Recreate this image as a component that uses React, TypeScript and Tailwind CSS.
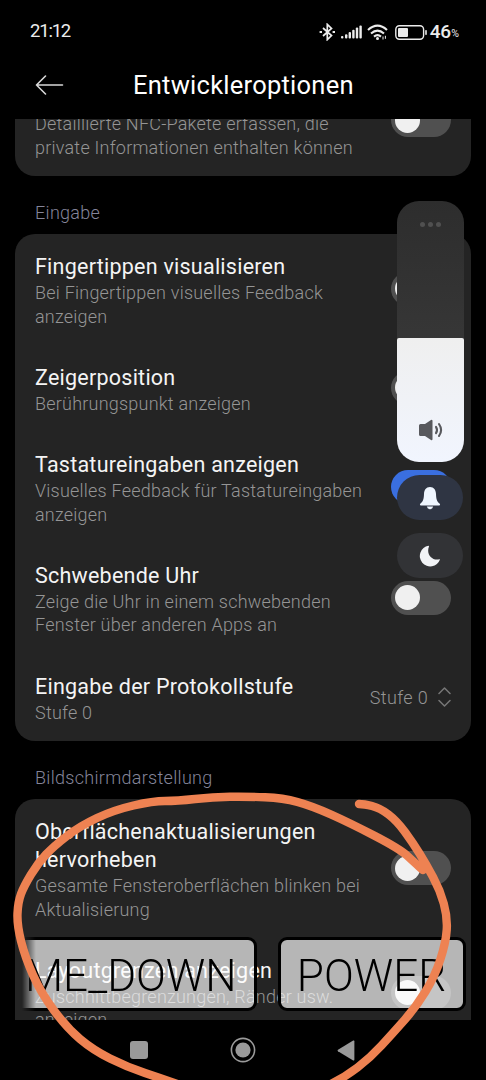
import React from 'react';

interface SettingRowProps {
    title: string[];
    summary: string[];
    checked?: boolean;
    children?: React.ReactNode;
}

const Toggle: React.FC<{ checked?: boolean }> = ({ checked = false }) => (
    <div
        className={`mb-[3px] flex h-[34px] w-[60.5px] shrink-0 items-center rounded-full px-[4.5px] ${
            checked ? 'justify-end bg-[#3a6fe0]' : 'justify-start bg-[#505050]'
        }`}
    >
        <div className="h-[25px] w-[25px] rounded-full bg-[#f0f0f0]"></div>
    </div>
);

const SettingRow: React.FC<SettingRowProps> = ({ title, summary, checked, children }) => (
    <div className="flex items-center justify-between pt-[19px] pr-5 pb-[16.7px] pl-5">
        <div className="whitespace-nowrap">
            {title.map((line) => (
                <div key={line} className="text-[21.5px] leading-[28px] tracking-[0.24px] text-[#f4f4f4]">{line}</div>
            ))}
            <div className="pt-[0.3px]">
                {summary.map((line) => (
                    <div key={line} className="text-[18px] leading-[23.4px] font-light tracking-[0.22px] text-[#959595]">{line}</div>
                ))}
            </div>
        </div>
        {children ?? <Toggle checked={checked} />}
    </div>
);

const SectionLabel: React.FC<{ text: string }> = ({ text }) => (
    <div className="pt-[25px] pb-[9px] pl-5 text-[18px] leading-[24px] font-light tracking-[0.3px] text-[#85859a]">{text}</div>
);

const StatusBar: React.FC = () => (
    <div className="flex h-[58px] items-center justify-between pt-[6px] pr-[27px] pl-[30px] text-[#ececec]">
        <span className="text-[18.5px] tracking-[-1.2px]">21:12</span>
        <div className="flex items-center">
            <svg width="17" height="18" viewBox="0 0 17 18" fill="none" stroke="currentColor" strokeWidth="1.7">
                <path d="M4 5 L12.5 12.6 L8.3 16.6 V1.4 L12.5 5.4 L4 13" />
                <path d="M0.6 9 H3 M13.6 9 H16" strokeWidth="2.2" />
            </svg>
            <svg className="ml-[5px]" width="21" height="14" viewBox="0 0 21 14" fill="currentColor">
                <rect x="0" y="11" width="2.4" height="2.6" rx="1" />
                <rect x="4" y="9.2" width="2.4" height="4.4" rx="1" />
                <rect x="7.6" y="7" width="2.4" height="6.6" rx="1" />
                <rect x="11.2" y="4.8" width="2.4" height="8.8" rx="1" />
                <rect x="14.8" y="2.6" width="2.4" height="11" rx="1" />
                <rect x="18.4" y="0.4" width="2.4" height="13.2" rx="1" />
            </svg>
            <svg className="ml-[5px]" width="22" height="17" viewBox="0 0 22 17" fill="none" stroke="currentColor" strokeWidth="2.1">
                <path d="M1 6 Q10.5 -2.6 20 6" />
                <path d="M4 9.5 Q10.5 3.7 17 9.5" />
                <path d="M7 12.6 Q10.5 9.6 14 12.6" />
                <circle cx="10.5" cy="14.6" r="1.5" fill="currentColor" stroke="none" />
                <path d="M16 12.5 V15.5 M18.4 11.8 V14.8" strokeWidth="1" />
            </svg>
            <svg className="ml-[6px]" width="33" height="15" viewBox="0 0 33 15" fill="none">
                <rect x="0.8" y="0.8" width="27.8" height="13.4" rx="3.6" stroke="currentColor" strokeWidth="1.4" />
                <rect x="3" y="3" width="10" height="9" rx="1" fill="currentColor" />
                <rect x="30.2" y="5" width="1.6" height="5" rx="0.8" fill="currentColor" />
            </svg>
            <span className="ml-[2px] text-[19px] leading-5 font-medium tracking-[-0.3px]">46</span>
            <span className="mt-[4px] ml-[0.5px] text-[10.5px] leading-4">%</span>
        </div>
    </div>
);

const Header: React.FC = () => (
    <div className="flex h-[61px] items-center pb-[8px] pl-[35px]">
        <svg width="29" height="20" viewBox="0 0 29 20" fill="none" stroke="#d8d8d8" strokeWidth="1.6" strokeLinecap="round" strokeLinejoin="round">
            <path d="M27.5 10 H1.5 M10.5 1 L1.5 10 L10.5 19" />
        </svg>
        <h1 className="ml-[69px] text-[25.5px] leading-8 tracking-[0.25px] whitespace-nowrap text-white">Entwickleroptionen</h1>
    </div>
);

const VolumePanel: React.FC = () => (
    <div className="absolute top-[201px] left-[396.5px] w-[67.5px]">
        <div className="flex h-[260.5px] flex-col overflow-hidden rounded-[22px] bg-gradient-to-b from-[#2d2d2d] via-[#363636] to-[#303030]">
            <div className="flex h-[137px] justify-center gap-[3.5px] pt-[21px]">
                <div className="h-[4.5px] w-[4.5px] rounded-full bg-[#505050]"></div>
                <div className="h-[4.5px] w-[4.5px] rounded-full bg-[#505050]"></div>
                <div className="h-[4.5px] w-[4.5px] rounded-full bg-[#505050]"></div>
            </div>
            <div className="flex flex-1 items-end justify-center rounded-t-[2px] bg-gradient-to-b from-[#efefef] to-[#f1f5fe] pb-[21px]">
                <svg width="25" height="22" viewBox="0 0 25 22" fill="none" stroke="#58595d" strokeWidth="2.1" strokeLinecap="round">
                    <path d="M2.5 5 H7 L13 0.9 Q14.5 0.2 14.5 2 V20 Q14.5 21.8 13 21.1 L7 17 H2.5 Q1 17 1 15.5 V6.5 Q1 5 2.5 5 Z" fill="#58595d" stroke="none" />
                    <path d="M18 7.8 Q20.1 11 18 14.2" />
                    <path d="M21 5 Q25.2 11 21 17" />
                </svg>
            </div>
        </div>
        <div className="mt-[13.5px] flex h-[45px] w-[66.5px] items-center justify-center rounded-full bg-[#2f3543]">
            <svg width="22" height="24" viewBox="0 0 22 24" fill="#eff6ff">
                <path d="M11 1 C7 1 5.2 4.2 5 8 C4.8 13.5 4 15.5 1.2 17.8 Q0.4 19 1.6 19.4 H20.4 Q21.6 19 20.8 17.8 C18 15.5 17.2 13.5 17 8 C16.8 4.2 15 1 11 1 Z" />
                <path d="M7.8 20.6 H14.2 Q13.6 23.2 11 23.2 Q8.4 23.2 7.8 20.6 Z" />
            </svg>
        </div>
        <div className="mt-[13px] flex h-[45px] w-[66.5px] items-center justify-center rounded-full bg-[#323336]">
            <svg width="22" height="22" viewBox="0 0 22 22" fill="#f1f3f6">
                <path d="M9.4 0.8 A10.4 10.4 0 1 0 21 14.6 Q21 14 20.2 14.2 C13.4 16 6.8 9.6 10 1.6 Q10.2 0.7 9.4 0.8 Z" />
            </svg>
        </div>
    </div>
);

// Bar of key names shown at the bottom while hardware keys are pressed
const KeyOverlay: React.FC = () => (
    <div className="absolute top-[937px] left-[22px] flex h-[74px] w-[443.5px] justify-end gap-[21px] overflow-hidden text-[44px] font-light text-black [mask-image:linear-gradient(to_right,transparent,black_14px)]">
        <div className="flex shrink-0 items-center justify-end rounded-[9px] border-[3px] border-black bg-white/67 pt-[4px] pr-[17px] pl-16 whitespace-nowrap">
            VOLUME_DOWN
        </div>
        <div className="flex w-[188px] shrink-0 items-center justify-center rounded-[9px] border-[3px] border-black bg-white/67 pt-[4px]">
            POWER
        </div>
    </div>
);

const NavigationBar: React.FC = () => (
    <div className="flex h-[60px] items-center bg-black pl-[130px]">
        <div className="h-[18px] w-[18px] rounded-[3px] bg-[#9a9a9a]"></div>
        <svg className="ml-[82px]" width="26" height="26" viewBox="0 0 26 26" fill="none">
            <circle cx="13" cy="13" r="11.6" stroke="#9a9a9a" strokeWidth="1.6" />
            <circle cx="13" cy="13" r="7.6" fill="#9a9a9a" />
        </svg>
        <svg className="ml-[81px]" width="18" height="21" viewBox="0 0 18 21" fill="#9a9a9a">
            <path d="M16.2 0.6 Q17.4 0 17.4 1.4 V19.6 Q17.4 21 16.2 20.4 L1 11.3 Q0 10.5 1 9.7 Z" />
        </svg>
    </div>
);

const strokePoints: [number, number][] = [
    [359, 804], [364, 804], [380, 808], [397, 821], [413, 843], [426, 864], [440, 890], [447.5, 917],
    [446, 942], [435, 976], [416, 1007], [393, 1033], [370, 1058], [345, 1077], [315, 1092],
    [250, 1100], [200, 1092], [163, 1079], [127, 1067], [93, 1050], [67, 1028], [41, 993], [25, 957],
    [17, 925], [18, 902], [24, 886], [38, 863], [54, 846], [80, 826], [114, 810], [153, 801],
    [177, 801], [213, 797], [247, 796.5], [283, 798], [312, 806], [350, 823], [400, 849], [415, 863], [423, 870],
];

// Joins the points with quadratic curves through their midpoints
const smoothPath = (points: [number, number][]) => {
    let d = `M${points[0][0]} ${points[0][1]}`;
    for (let i = 1; i < points.length - 1; i++) {
        const [x, y] = points[i];
        const [nx, ny] = points[i + 1];
        d += ` Q${x} ${y} ${(x + nx) / 2} ${(y + ny) / 2}`;
    }
    const [lx, ly] = points[points.length - 1];
    return `${d} L${lx} ${ly}`;
};

const Annotation: React.FC = () => (
    <svg className="absolute top-0 left-0" width="486" height="1080" viewBox="0 0 486 1080" fill="none">
        <path d={smoothPath(strokePoints)} stroke="#ee8252" strokeWidth="8.4" strokeLinecap="round" strokeLinejoin="round" />
    </svg>
);

const App: React.FC = () => {
    const inputSettings = [
        {
            title: ['Fingertippen visualisieren'],
            summary: ['Bei Fingertippen visuelles Feedback', 'anzeigen'],
        },
        { title: ['Zeigerposition'], summary: ['Berührungspunkt anzeigen'] },
        {
            title: ['Tastatureingaben anzeigen'],
            summary: ['Visuelles Feedback für Tastatureingaben', 'anzeigen'],
            checked: true,
        },
        {
            title: ['Schwebende Uhr'],
            summary: ['Zeige die Uhr in einem schwebenden', 'Fenster über anderen Apps an'],
        },
    ];

    return (
        <div className="relative flex h-[1080px] w-[486px] flex-col overflow-hidden bg-black font-['Roboto','Liberation_Sans',sans-serif]">
            <StatusBar />
            <Header />

            <div className="h-[901px] overflow-hidden px-[15px]">
                <div className="-mt-[54px] rounded-[20px] bg-[#242424]">
                    <SettingRow
                        title={['NFC-Protokollierung']}
                        summary={['Detaillierte NFC-Pakete erfassen, die', 'private Informationen enthalten können']}
                    />
                </div>

                <SectionLabel text="Eingabe" />
                <div className="rounded-[20px] bg-[#242424]">
                    {inputSettings.map((item) => (
                        <SettingRow key={item.title[0]} {...item} />
                    ))}
                    <SettingRow title={['Eingabe der Protokollstufe']} summary={['Stufe 0']}>
                        <div className="mb-[2px] flex items-center gap-[10px] text-[18px] font-light tracking-[0.35px] text-[#959595]">
                            Stufe 0
                            <svg width="13" height="20" viewBox="0 0 13 20" fill="none" stroke="#777777" strokeWidth="1.5" strokeLinecap="round" strokeLinejoin="round">
                                <path d="M1 6.5 L6.5 1 L12 6.5 M1 13.5 L6.5 19 L12 13.5" />
                            </svg>
                        </div>
                    </SettingRow>
                </div>

                <SectionLabel text="Bildschirmdarstellung" />
                <div className="rounded-[20px] bg-[#242424]">
                    <SettingRow
                        title={['Oberflächenaktualisierungen', 'hervorheben']}
                        summary={['Gesamte Fensteroberflächen blinken bei', 'Aktualisierung']}
                    />
                    <SettingRow
                        title={['Layoutgrenzen anzeigen']}
                        summary={['Zuschnittbegrenzungen, Ränder usw.', 'anzeigen']}
                    />
                </div>
            </div>

            <NavigationBar />
            <VolumePanel />
            <KeyOverlay />
            <Annotation />
        </div>
    );
};

export default App;
